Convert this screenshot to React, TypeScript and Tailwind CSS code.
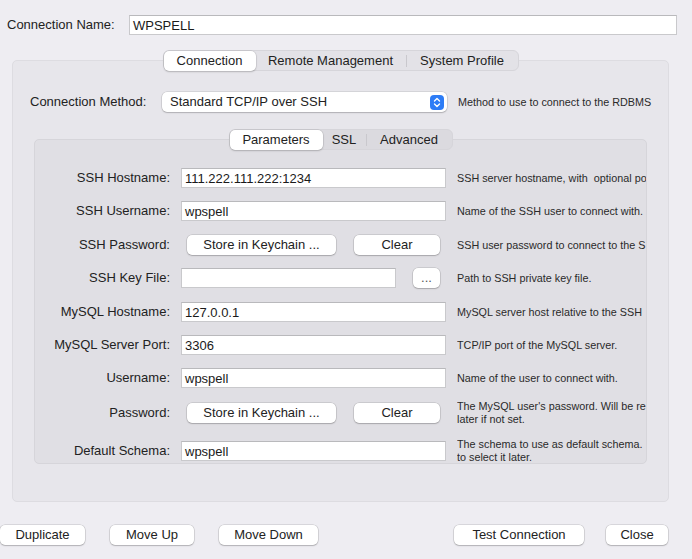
import * as React from 'react'

type Tab = { label: string; w: string }

function Segmented({ tabs, active, bg }: { tabs: Tab[]; active: number; bg: string }) {
  return (
    <div className={`flex h-[21px] items-center rounded-[6px] border border-[#d6d5da] ${bg}`}>
      {tabs.map((t, i) => {
        const sel = i === active
        const divider = i > 0 && i !== active && i - 1 !== active
        return (
          <div key={t.label} className="flex h-full items-center">
            {divider && <div className="h-[12px] w-px bg-[#c9c8cd]" />}
            <div
              className={`flex h-[20px] items-center justify-center text-[13px] ${t.w} ${
                sel ? 'rounded-[5px] bg-white shadow-[0_0_0_0.5px_rgba(0,0,0,0.12),0_1px_2px_rgba(0,0,0,0.18)]' : ''
              }`}
            >
              {t.label}
            </div>
          </div>
        )
      })}
    </div>
  )
}

function Btn({ children, className = '' }: { children: React.ReactNode; className?: string }) {
  return (
    <div
      className={`flex h-[20px] items-center justify-center rounded-[5px] bg-white text-[13px] text-[#222] shadow-[0_0_0_0.5px_rgba(0,0,0,0.18),0_1px_1.5px_rgba(0,0,0,0.18)] ${className}`}
    >
      {children}
    </div>
  )
}

function Field({ value, className = '' }: { value?: string; className?: string }) {
  return (
    <div
      className={`flex h-[20px] items-center border border-[#c9c9cc] border-t-[#b9b9bc] bg-white pl-[3px] pt-[1px] text-[13px] text-[#1a1a1a] ${className}`}
    >
      {value}
    </div>
  )
}

type Row = { label: string; mt: string; help: string[]; control: React.ReactNode }

const rows: Row[] = [
  {
    label: 'SSH Hostname:',
    mt: 'mt-0',
    help: ['SSH server hostname, with  optional po'],
    control: <Field value="111.222.111.222:1234" className="w-[265px]" />,
  },
  {
    label: 'SSH Username:',
    mt: 'mt-[13px]',
    help: ['Name of the SSH user to connect with.'],
    control: <Field value="wpspell" className="w-[265px]" />,
  },
  {
    label: 'SSH Password:',
    mt: 'mt-[14px]',
    help: ['SSH user password to connect to the S'],
    control: (
      <div className="flex w-[265px]">
        <Btn className="ml-[6px] w-[149px]">Store in Keychain ...</Btn>
        <Btn className="ml-[18px] w-[86px]">Clear</Btn>
      </div>
    ),
  },
  {
    label: 'SSH Key File:',
    mt: 'mt-[13px]',
    help: ['Path to SSH private key file.'],
    control: (
      <div className="flex w-[265px]">
        <Field className="w-[215px]" />
        <Btn className="ml-[17px] w-[27px] text-[11px] text-[#555]">...</Btn>
      </div>
    ),
  },
  {
    label: 'MySQL Hostname:',
    mt: 'mt-[14px]',
    help: ['MySQL server host relative to the SSH'],
    control: <Field value="127.0.0.1" className="w-[265px]" />,
  },
  {
    label: 'MySQL Server Port:',
    mt: 'mt-[13px]',
    help: ['TCP/IP port of the MySQL server.'],
    control: <Field value="3306" className="w-[265px]" />,
  },
  {
    label: 'Username:',
    mt: 'mt-[13px]',
    help: ['Name of the user to connect with.'],
    control: <Field value="wpspell" className="w-[265px]" />,
  },
  {
    label: 'Password:',
    mt: 'mt-[15px]',
    help: ["The MySQL user's password. Will be re", 'later if not set.'],
    control: (
      <div className="flex w-[265px]">
        <Btn className="ml-[6px] w-[149px]">Store in Keychain ...</Btn>
        <Btn className="ml-[18px] w-[86px]">Clear</Btn>
      </div>
    ),
  },
  {
    label: 'Default Schema:',
    mt: 'mt-[18px]',
    help: ['The schema to use as default schema.', 'to select it later.'],
    control: <Field value="wpspell" className="w-[265px]" />,
  },
]

export default function App() {
  return (
    <div className="h-[559px] w-[692px] overflow-hidden bg-[#eeedf2] font-['Liberation_Sans',Arial,sans-serif] text-[13px] text-[#222]">
      <div className="flex items-center pl-[7px] pr-[15px] pt-[15px]">
        <span className="w-[122px]">Connection Name:</span>
        <Field value="WPSPELL" className="flex-1" />
      </div>

      <div className="ml-[12px] mt-[25px] h-[442px] w-[657px] rounded-[5px] border border-[#dddce1] bg-[#e7e6eb]">
        <div className="-mt-[11px] flex justify-center">
          <Segmented
            active={0}
            bg="bg-[#e3e2e7]"
            tabs={[
              { label: 'Connection', w: 'w-[92px]' },
              { label: 'Remote Management', w: 'w-[150px]' },
              { label: 'System Profile', w: 'w-[111px]' },
            ]}
          />
        </div>

        <div className="mt-[21px] flex items-center">
          <span className="w-[149px] pl-[17px]">Connection Method:</span>
          <div className="flex h-[20px] w-[285px] items-center justify-between rounded-[5px] bg-white pl-[8px] pr-[3px] shadow-[0_0_0_0.5px_rgba(0,0,0,0.15),0_1px_1.5px_rgba(0,0,0,0.18)]">
            <span>Standard TCP/IP over SSH</span>
            <div className="flex h-[15px] w-[14px] items-center justify-center rounded-[4px] bg-[#2d7cf6]">
              <svg width="8" height="11" viewBox="0 0 8 11" fill="none" stroke="white" strokeWidth="1.4" strokeLinecap="round" strokeLinejoin="round">
                <path d="M1.5 4 L4 1.5 L6.5 4" />
                <path d="M1.5 7 L4 9.5 L6.5 7" />
              </svg>
            </div>
          </div>
          <span className="ml-[11px] whitespace-nowrap text-[10.8px] text-[#2a2a2a]">Method to use to connect to the RDBMS</span>
        </div>

        <div className="ml-[21px] mt-[27px] h-[325px] w-[613px] rounded-[5px] border border-[#d6d5da] bg-[#e0dfe4]">
          <div className="-mt-[11px] flex justify-center">
            <Segmented
              active={0}
              bg="bg-[#dbdadf]"
              tabs={[
                { label: 'Parameters', w: 'w-[93px]' },
                { label: 'SSL', w: 'w-[43px]' },
                { label: 'Advanced', w: 'w-[85px]' },
              ]}
            />
          </div>

          <div className="mt-[18px] flex flex-col">
            {rows.map((r) => (
              <div key={r.label} className={`flex h-[20px] items-center ${r.mt}`}>
                <span className="w-[135px] shrink-0 text-right">{r.label}</span>
                <div className="ml-[11px] shrink-0">{r.control}</div>
                <div className="ml-[11px] min-w-0 flex-1 overflow-hidden pr-[2px] text-[10.8px] leading-[13px] text-[#2a2a2a]">
                  {r.help.map((h) => (
                    <div key={h} className="whitespace-pre">
                      {h}
                    </div>
                  ))}
                </div>
              </div>
            ))}
          </div>
        </div>
      </div>

      <div className="mt-[23px] flex pr-[24px]">
        <Btn className="w-[85px]">Duplicate</Btn>
        <Btn className="ml-[25px] w-[84px]">Move Up</Btn>
        <Btn className="ml-[25px] w-[99px]">Move Down</Btn>
        <Btn className="ml-auto w-[130px]">Test Connection</Btn>
        <Btn className="ml-[22px] w-[62px]">Close</Btn>
      </div>
    </div>
  )
}
